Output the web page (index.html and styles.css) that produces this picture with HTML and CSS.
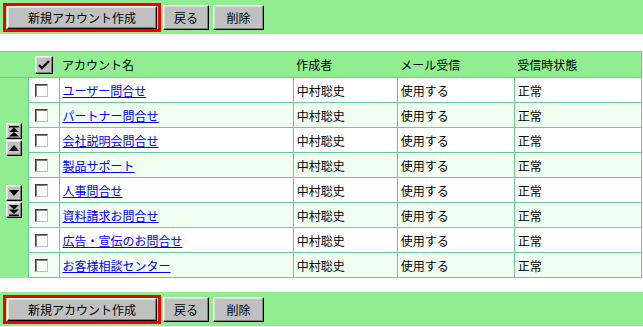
FILE: index.html
```html
<!DOCTYPE html>
<html lang="ja">
<head>
    <meta charset="UTF-8">
    <meta name="viewport" content="width=device-width, initial-scale=1.0">
    <title>アカウント一覧</title>
    <link rel="stylesheet" href="styles.css">
</head>
<body>
    <div class="bar">
        <span class="focus"><button class="btn wide">新規アカウント作成</button></span>
        <button class="btn back">戻る</button>
        <button class="btn del">削除</button>
    </div>

    <table class="accounts">
        <colgroup>
            <col class="c-move">
            <col class="c-chk">
            <col class="c-name">
            <col class="c-owner">
            <col class="c-mail">
            <col class="c-state">
        </colgroup>
        <thead>
            <tr>
                <th></th>
                <th class="chk-head">
                    <button class="btn check-all">
                        <svg width="12" height="10" viewBox="0 0 12 10"><path d="M1 5 L4 8 L11 1" fill="none" stroke="#000" stroke-width="2.4"/></svg>
                    </button>
                </th>
                <th>アカウント名</th>
                <th>作成者</th>
                <th>メール受信</th>
                <th>受信時状態</th>
            </tr>
        </thead>
        <tbody>
            <tr>
                <td class="move" rowspan="8">
                    <button class="btn arrow">
                        <svg width="10" height="11" viewBox="0 0 10 11"><path d="M0 0h10v1.5H0z M5 1.5 L10 6 H0z M5 6 L10 10.5 H0z"/></svg>
                    </button>
                    <button class="btn arrow">
                        <svg width="10" height="6" viewBox="0 0 10 6"><path d="M5 0 L10 6 H0z"/></svg>
                    </button>
                    <div class="spacer"></div>
                    <button class="btn arrow">
                        <svg width="10" height="6" viewBox="0 0 10 6"><path d="M0 0 H10 L5 6z"/></svg>
                    </button>
                    <button class="btn arrow">
                        <svg width="10" height="11" viewBox="0 0 10 11"><path d="M0 0 H10 L5 4.5z M0 4.5 H10 L5 9z M0 9.5h10V11H0z"/></svg>
                    </button>
                </td>
                <td class="chk"><input type="checkbox"></td>
                <td><a href="#">ユーザー問合せ</a></td>
                <td>中村聡史</td>
                <td>使用する</td>
                <td>正常</td>
            </tr>
            <tr>
                <td class="chk"><input type="checkbox"></td>
                <td><a href="#">パートナー問合せ</a></td>
                <td>中村聡史</td>
                <td>使用する</td>
                <td>正常</td>
            </tr>
            <tr>
                <td class="chk"><input type="checkbox"></td>
                <td><a href="#">会社説明会問合せ</a></td>
                <td>中村聡史</td>
                <td>使用する</td>
                <td>正常</td>
            </tr>
            <tr>
                <td class="chk"><input type="checkbox"></td>
                <td><a href="#">製品サポート</a></td>
                <td>中村聡史</td>
                <td>使用する</td>
                <td>正常</td>
            </tr>
            <tr>
                <td class="chk"><input type="checkbox"></td>
                <td><a href="#">人事問合せ</a></td>
                <td>中村聡史</td>
                <td>使用する</td>
                <td>正常</td>
            </tr>
            <tr>
                <td class="chk"><input type="checkbox"></td>
                <td><a href="#">資料請求お問合せ</a></td>
                <td>中村聡史</td>
                <td>使用する</td>
                <td>正常</td>
            </tr>
            <tr>
                <td class="chk"><input type="checkbox"></td>
                <td><a href="#">広告・宣伝のお問合せ</a></td>
                <td>中村聡史</td>
                <td>使用する</td>
                <td>正常</td>
            </tr>
            <tr>
                <td class="chk"><input type="checkbox"></td>
                <td><a href="#">お客様相談センター</a></td>
                <td>中村聡史</td>
                <td>使用する</td>
                <td>正常</td>
            </tr>
        </tbody>
    </table>

    <div class="bar bottom">
        <span class="focus"><button class="btn wide">新規アカウント作成</button></span>
        <button class="btn back">戻る</button>
        <button class="btn del">削除</button>
    </div>
</body>
</html>
```

FILE: styles.css
```css
body {
    margin: 0;
    padding: 0;
    font-family: "Noto Sans CJK JP", "Noto Sans", sans-serif;
    font-size: 12px;
    color: #000;
    background: #fff;
}
.bar {
    display: flex;
    align-items: center;
    height: 34px;
    padding-left: 3px;
    background: #90ee90;
}
.bar.bottom {
    margin-top: 14px;
}
.focus {
    display: inline-flex;
    border: 3px solid #f40000;
    padding: 0 1px;
}
.btn {
    display: inline-flex;
    align-items: center;
    justify-content: center;
    box-sizing: border-box;
    margin: 0;
    padding: 0;
    font-family: inherit;
    font-size: 12px;
    color: #000;
    background: #c0c0c0;
    border: 1px solid;
    border-color: #fff #000 #000 #fff;
    box-shadow: inset -1px -1px #808080, inset 1px 1px #dfdfdf;
    cursor: pointer;
}
.btn.wide {
    width: 150px;
    height: 23px;
}
.btn.back {
    width: 46px;
    height: 25px;
    margin-left: 2px;
}
.btn.del {
    width: 51px;
    height: 25px;
    margin-left: 4px;
}
.accounts {
    margin-top: 17px;
    width: 642px;
    table-layout: fixed;
    border-collapse: collapse;
}
.c-move { width: 28px; }
.c-chk { width: 31px; }
.c-name { width: 234px; }
.c-owner { width: 104px; }
.c-mail { width: 117px; }
.c-state { width: 127px; }
.accounts th {
    height: 25px;
    padding: 0 3px;
    text-align: left;
    font-weight: normal;
    background: #90ee90;
    border-top: 1px solid #66cc99;
    border-bottom: 1px solid #66cc99;
}
.accounts th:last-child {
    border-right: 1px solid #66cc99;
}
.accounts th.chk-head {
    padding: 0;
    text-align: center;
}
.check-all {
    width: 18px;
    height: 18px;
    vertical-align: middle;
}
.accounts td {
    height: 24px;
    padding: 0 3px;
    border: 1px solid #66cc99;
    white-space: nowrap;
}
.accounts tbody tr:nth-child(even) td {
    background: #f0fff0;
}
.accounts tbody tr td.move {
    vertical-align: top;
    padding: 45px 0 0 6px;
    background: #90ee90;
    border-left: none;
    border-bottom: none;
}
.arrow {
    display: flex;
    width: 16px;
    height: 16px;
    margin-bottom: 1px;
}
.spacer {
    height: 28px;
}
.accounts td.chk {
    padding: 0 0 0 6px;
}
.chk input {
    appearance: none;
    display: block;
    width: 13px;
    height: 13px;
    margin: 0;
    background: #fff;
    border: 1px solid;
    border-color: #404040 #c0c0c0 #c0c0c0 #404040;
    box-shadow: inset 1px 1px #808080;
}
.accounts a {
    color: #0000ff;
    text-decoration: underline;
}
```
